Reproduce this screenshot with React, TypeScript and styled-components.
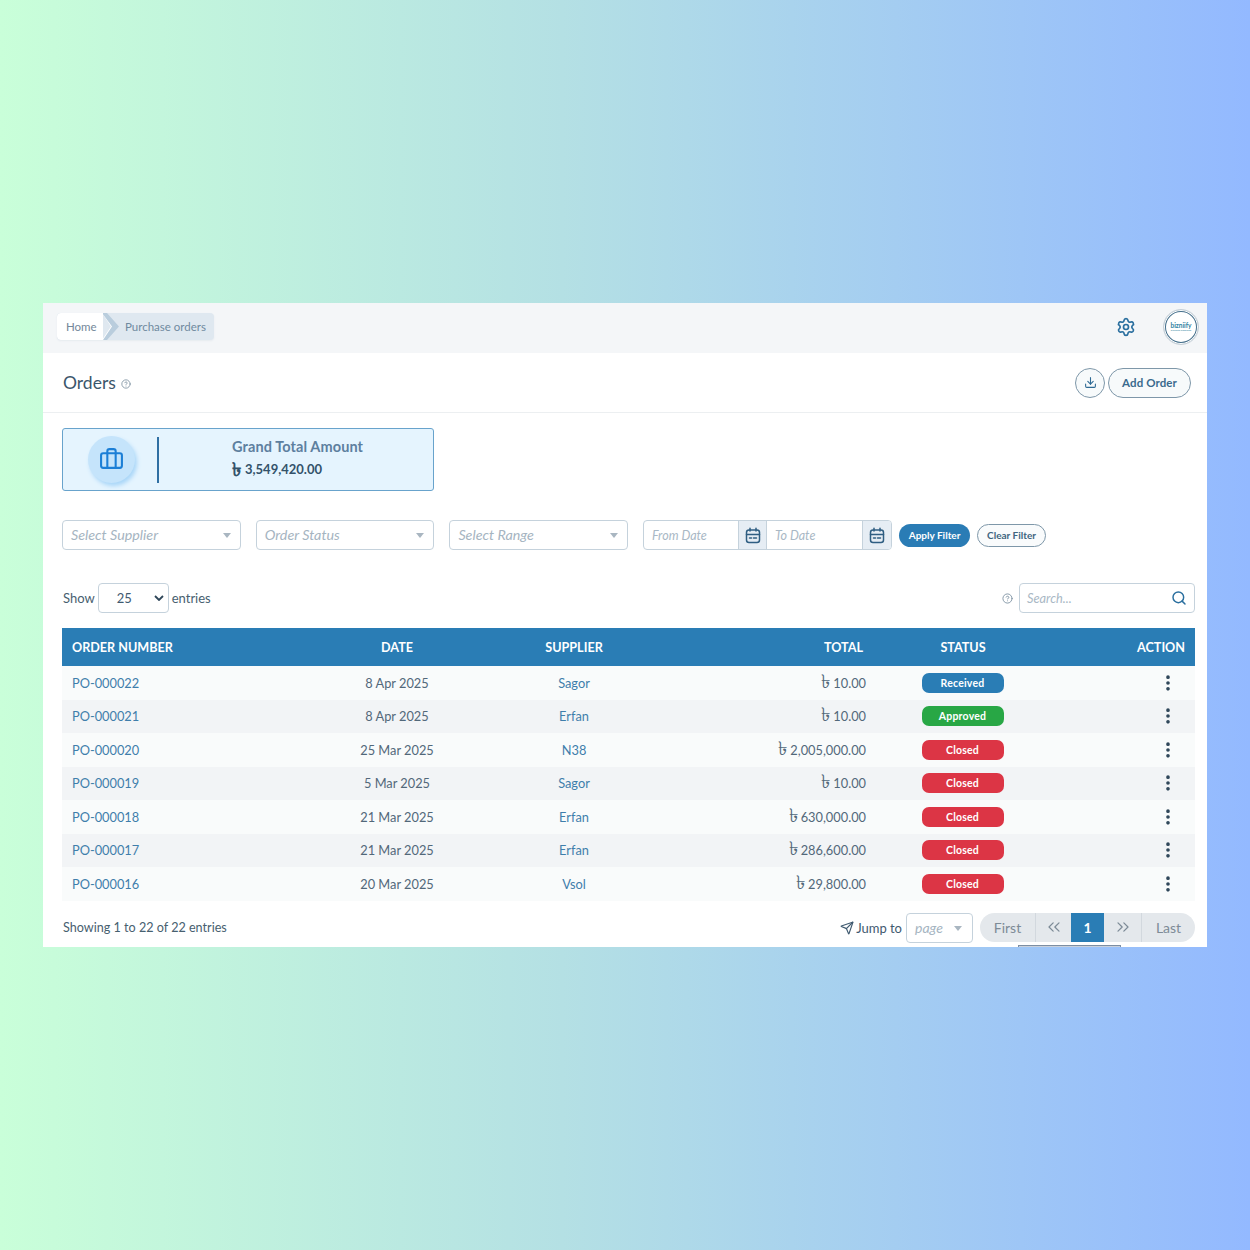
import React from 'react';
import styled, { createGlobalStyle } from 'styled-components';
import { Briefcase, CircleHelp, Download, EllipsisVertical, Search, Send, Settings, ChevronsLeft, ChevronsRight } from 'lucide-react';

const Global = createGlobalStyle`
  html, body { margin: 0; padding: 0; }
  * { box-sizing: border-box; }
  body { font-family: Lato, "Noto Sans", "DejaVu Sans", sans-serif; color: #3f5a70; }
`;

const Page = styled.div`
  width: 1250px; height: 1250px; display: flex; align-items: center; justify-content: center;
  background: linear-gradient(90deg, #c9ffd9 0%, #b4e0e4 45%, #93b9ff 100%);
`;
const Card = styled.main`
  position: relative; width: 1164px; height: 644px; background: #fff; overflow: hidden; display: flex; flex-direction: column;
`;
const TopBar = styled.header`
  height: 50px; flex: none; background: #f4f6f8; display: flex; align-items: center; justify-content: space-between; padding: 0 8px 3px 14px;
`;
const Crumbs = styled.nav`
  display: flex; align-items: stretch; height: 27px; font-size: 11.5px; border-radius: 4px; overflow: hidden; background: #dfe8f0; box-shadow: 0 1px 2px #e6ebef;
`;
const CrumbHome = styled.span`
  background: #fff; color: #74889a; padding: 0 9px; display: flex; align-items: center; width: 46px; position: relative; border-radius: 4px 0 0 4px;
`;
const CrumbArrow = styled.svg`
  width: 17px; height: 27px; flex: none; margin-left: -1px; background: #dfe8f0;
`;
const CrumbCurrent = styled.span`
  color: #6f8a9f; display: flex; align-items: center; padding: 0 8px 0 6px;
`;
const TopRight = styled.div`
  display: flex; align-items: center; gap: 27px; color: #2a6f9f;
`;
const Avatar = styled.div`
  width: 36px; height: 36px; border-radius: 50%; background: #fff; border: 1px solid #c6d0d8; box-shadow: inset 0 0 0 1px #fff, inset 0 0 0 2px #46708c;
  display: flex; flex-direction: column; align-items: center; justify-content: center; color: #2f7fa0; font-size: 6.500px; font-weight: 700; line-height: 7px;
`;
const AvatarSub = styled.span`
  font-size: 2.5px; line-height: 3px; font-weight: 400;
`;
const TitleBar = styled.section`
  height: 60px; flex: none; border-bottom: 1px solid #eceff1; display: flex; align-items: center; justify-content: space-between; padding: 0 16px 0 20px;
`;
const Title = styled.h1`
  margin: 0 0 1px; font-size: 17.5px; font-weight: 400; color: #3b566b; display: flex; align-items: center; gap: 5px;
  svg { color: #7b8f9f; margin-top: 3px; }
`;
const TitleActions = styled.div`
  display: flex; gap: 3px;
`;
const RoundBtn = styled.button`
  width: 30px; height: 30px; border-radius: 50%; border: 1px solid #7e97a9; background: #f7fafb; color: #2e6a94; padding: 0; display: flex; align-items: center; justify-content: center;
`;
const PillBtn = styled.button`
  height: 30px; width: 83px; border-radius: 15px; border: 1px solid #7e97a9; background: #f7fafb; color: #3a6a8e; font: 700 11.5px Lato, sans-serif; padding: 0; letter-spacing: .1px;
`;
const Content = styled.div`
  flex: 1; padding: 15px 12px 0 19px; display: flex; flex-direction: column;
`;
const Kpi = styled.section`
  width: 372px; height: 63px; border: 1px solid #68a3cc; border-radius: 3px; background: #e5f4fe; display: flex; align-items: center; padding-left: 25px;
`;
const KpiIcon = styled.div`
  width: 47px; height: 47px; border-radius: 50%; background: #c5e4fb; box-shadow: 2px 3px 4px #a9d6f8; color: #1c7fd6; display: flex; align-items: center; justify-content: center;
`;
const KpiRule = styled.div`
  width: 2px; height: 46px; background: #2f6fa3; margin-left: 22px;
`;
const KpiText = styled.div`
  margin: 0 0 4px 73px; display: flex; flex-direction: column; gap: 6px;
`;
const KpiLabel = styled.div`
  font-size: 14.5px; font-weight: 700; color: #5d7f9f; letter-spacing: .1px;
`;
const KpiValue = styled.div`
  font-size: 13px; font-weight: 700; color: #33526a; display: flex; align-items: center; height: 16px;
`;
const Taka = styled.span`
  font-size: 19px; line-height: 0; margin-right: 3px; font-weight: 400;
`;
const KpiTaka = styled(Taka)`
  font-weight: 700; margin-right: 4px;
`;
const Filters = styled.div`
  margin-top: 29px; display: flex; align-items: center;
`;
const SelectBox = styled.div`
  width: 178.7px; height: 30px; border: 1px solid #c5d2dc; border-radius: 4px; margin-right: 15px; padding: 0 9px 2px 8px; display: flex; align-items: center; justify-content: space-between;
  font-size: 14.300px; font-style: italic; color: #a5b4c1; background: #fff;
`;
const Caret = styled.span`
  width: 0; height: 0; border-left: 4.5px solid transparent; border-right: 4.5px solid transparent; border-top: 5px solid #a9b6c1;
  margin-top: 2px;
`;
const DateGroup = styled.div`
  width: 249px; height: 30px; border: 1px solid #c5d2dc; border-radius: 4px; display: flex; overflow: hidden; margin-right: 7px;
`;
const DateText = styled.div<{ $w: number }>`
  width: ${p => p.$w}px; padding-left: 8px; display: flex; align-items: center; font-size: 12.5px; font-style: italic; color: #a9b8c5;
`;
const DateAddon = styled.div`
  width: 29px; flex: none; background: #e6edf4; border-left: 1px solid #c5d2dc; border-right: 1px solid #c5d2dc; display: flex; align-items: center; justify-content: center; color: #2f5e82;
  &:last-child { border-right: 0; }
`;
const ApplyBtn = styled.button`
  width: 71px; height: 23px; border-radius: 12px; border: 0; background: #2a7cb5; color: #fff; font: 700 10px Lato, sans-serif; padding: 0; margin-right: 7px;
`;
const ClearBtn = styled.button`
  width: 69px; height: 23px; border-radius: 12px; border: 1px solid #7e97a9; background: #f9fbfc; color: #3f6580; font: 700 10px Lato, sans-serif; padding: 0;
`;
const ListBar = styled.div`
  margin-top: 33px; height: 30px; display: flex; align-items: center; justify-content: space-between; font-size: 13px; color: #47606f;
`;
const ShowGroup = styled.div`
  display: flex; align-items: center; gap: 3px; padding-left: 1px;
`;
const PageSize = styled.div`
  width: 71px; height: 30px; border: 1px solid #c5d2dc; border-radius: 4px; display: flex; align-items: center; justify-content: space-between; padding: 0 4px 0 18px; color: #3f5a70;
`;
const SearchGroup = styled.div`
  display: flex; align-items: center; gap: 6px; color: #7f93a3;
`;
const SearchBox = styled.div`
  width: 176px; height: 30px; border: 1px solid #c5d2dc; border-radius: 4px; display: flex; align-items: center; justify-content: space-between; padding: 0 7px; font-size: 12.8px; font-style: italic; color: #a9b8c5;
  svg { color: #2a6f9f; }
`;
const Table = styled.table`
  margin-top: 15px; width: 1133px; table-layout: fixed; border-collapse: collapse; font-size: 12.8px;
`;
const Th = styled.th<{ $a?: string; $pr?: number }>`
  height: 38px; background: #2a7db5; color: #fff; font-size: 12.6px; font-weight: 700; text-align: ${p => p.$a || 'center'}; padding: 0 ${p => p.$pr ?? 10}px 0 10px;
`;
const Tr = styled.tr`
  height: 33.5px;
  background: #f9fbfb;
  &:nth-child(even) { background: #f2f4f6; }
`;
const Td = styled.td<{ $a?: string }>`
  padding: 0 10px; text-align: ${p => p.$a || 'center'}; color: #52687a;
`;
const LinkTd = styled(Td)`
  color: #3f7eab;
`;
const Status = styled.span<{ $c: string }>`
  display: inline-flex; align-items: center; justify-content: center; width: 82px; height: 20px; margin-right: 1px; border-radius: 7px; background: ${p => p.$c}; color: #fff; font-size: 10.5px; font-weight: 700; letter-spacing: .2px;
`;
const Dots = styled.span`
  display: inline-flex; margin-right: 7px; color: #2d4558; vertical-align: middle;
`;
const Footer = styled.div`
  margin-top: 12px; padding-left: 1px; display: flex; align-items: center; justify-content: space-between; font-size: 12.6px; color: #47606f;
`;
const FootRight = styled.div`
  display: flex; align-items: center;
`;
const Jump = styled.span`
  display: flex; align-items: center; gap: 2px; font-size: 13px; color: #3f5a70; margin-right: 4px;
`;
const PageSelect = styled.div`
  width: 67px; height: 30px; border: 1px solid #c5d2dc; border-radius: 4px; display: flex; align-items: center; justify-content: space-between; padding: 0 10px 0 8px; font-size: 14px; font-style: italic; color: #a5b4c1; margin-right: 7px;
`;
const Pager = styled.div`
  display: flex; height: 29px; margin-bottom: 1px; border-radius: 15px; overflow: hidden; background: #e4e8ec;
`;
const PageItem = styled.span<{ $w: number; $on?: boolean; $nb?: boolean }>`
  width: ${p => p.$w}px; display: flex; align-items: center; justify-content: center; font-size: 14px; font-weight: ${p => p.$on ? 700 : 400};
  color: ${p => p.$on ? '#fff' : '#7d8b97'}; background: ${p => p.$on ? '#2a7db5' : 'transparent'};
  border-left: ${p => p.$nb ? '0' : '1px solid #d2d8de'};
`;
const ClippedTip = styled.div`
  position: absolute; left: 975px; bottom: 0; width: 103px; height: 2px; background: #c9d1dc; border: 1px solid #7d8ea3; border-bottom: 0;
`;

const CalendarIcon = () => (
  <svg width="16" height="17" viewBox="0 0 16 17" fill="none" stroke="currentColor" strokeWidth="1.500" strokeLinecap="round">
    <rect x="1.500" y="3" width="13" height="12.500" rx="2.500" />
    <path d="M1.500 7.500H14.500M5 1.200V4M11 1.200V4M4.500 11H6.500M8.500 11H11.500" />
  </svg>
);

const rows = [
  ['PO-000022', '8 Apr 2025', 'Sagor', '10.00', 'Received'],
  ['PO-000021', '8 Apr 2025', 'Erfan', '10.00', 'Approved'],
  ['PO-000020', '25 Mar 2025', 'N38', '2,005,000.00', 'Closed'],
  ['PO-000019', '5 Mar 2025', 'Sagor', '10.00', 'Closed'],
  ['PO-000018', '21 Mar 2025', 'Erfan', '630,000.00', 'Closed'],
  ['PO-000017', '21 Mar 2025', 'Erfan', '286,600.00', 'Closed'],
  ['PO-000016', '20 Mar 2025', 'Vsol', '29,800.00', 'Closed'],
];
const colors: Record<string, string> = { Received: '#2a7db5', Approved: '#28a745', Closed: '#dc3545' };

export default function App() {
  return (
    <Page>
      <Global />
      <Card>
        <TopBar>
          <Crumbs>
            <CrumbHome>Home</CrumbHome>
            <CrumbArrow viewBox="0 0 17 27"><path d="M0 0H4L16.500 13.500L4 27H0L9 13.500Z" fill="#fff" /><path d="M0 0H5L17 13.500L5 27H1L10 13.500Z" fill="#b9cddd" /></CrumbArrow>
            <CrumbCurrent>Purchase orders</CrumbCurrent>
          </Crumbs>
          <TopRight>
            <Settings size={20} strokeWidth={2} />
            <Avatar>bizniify<AvatarSub>business simplified</AvatarSub></Avatar>
          </TopRight>
        </TopBar>
        <TitleBar>
          <Title>Orders <CircleHelp size={10} /></Title>
          <TitleActions>
            <RoundBtn aria-label="Download"><Download size={13} /></RoundBtn>
            <PillBtn>Add Order</PillBtn>
          </TitleActions>
        </TitleBar>
        <Content>
          <Kpi>
            <KpiIcon><Briefcase size={25} strokeWidth={2} /></KpiIcon>
            <KpiRule />
            <KpiText>
              <KpiLabel>Grand Total Amount</KpiLabel>
              <KpiValue><KpiTaka>৳</KpiTaka>3,549,420.00</KpiValue>
            </KpiText>
          </Kpi>
          <Filters>
            <SelectBox>Select Supplier<Caret /></SelectBox>
            <SelectBox>Order Status<Caret /></SelectBox>
            <SelectBox>Select Range<Caret /></SelectBox>
            <DateGroup>
              <DateText $w={94}>From Date</DateText>
              <DateAddon><CalendarIcon /></DateAddon>
              <DateText $w={95}>To Date</DateText>
              <DateAddon><CalendarIcon /></DateAddon>
            </DateGroup>
            <ApplyBtn>Apply Filter</ApplyBtn>
            <ClearBtn>Clear Filter</ClearBtn>
          </Filters>
          <ListBar>
            <ShowGroup>
              Show
              <PageSize>25<svg width="10" height="6" viewBox="0 0 10 6"><path d="M1 1l4 4 4-4" fill="none" stroke="#2d4558" strokeWidth="1.800" /></svg></PageSize>
              entries
            </ShowGroup>
            <SearchGroup>
              <CircleHelp size={11} />
              <SearchBox>Search...<Search size={16} strokeWidth={2.200} /></SearchBox>
            </SearchGroup>
          </ListBar>
          <Table>
            <colgroup>
              <col width={247} /><col width={176} /><col width={178} /><col width={213} /><col width={174} /><col width={145} />
            </colgroup>
            <thead>
              <tr>
                <Th $a="left">ORDER NUMBER</Th>
                <Th>DATE</Th>
                <Th>SUPPLIER</Th>
                <Th $a="right" $pr={13}>TOTAL</Th>
                <Th>STATUS</Th>
                <Th $a="right">ACTION</Th>
              </tr>
            </thead>
            <tbody>
              {rows.map(r => (
                <Tr key={r[0]}>
                  <LinkTd $a="left">{r[0]}</LinkTd>
                  <Td>{r[1]}</Td>
                  <LinkTd>{r[2]}</LinkTd>
                  <Td $a="right"><Taka>৳</Taka>{r[3]}</Td>
                  <Td><Status $c={colors[r[4]]}>{r[4]}</Status></Td>
                  <Td $a="right"><Dots><EllipsisVertical size={20} strokeWidth={2.400} /></Dots></Td>
                </Tr>
              ))}
            </tbody>
          </Table>
          <Footer>
            <span>Showing 1 to 22 of 22 entries</span>
            <FootRight>
              <Jump><Send size={14} />Jump to</Jump>
              <PageSelect>page<Caret /></PageSelect>
              <Pager>
                <PageItem $w={55} $nb>First</PageItem>
                <PageItem $w={36}><ChevronsLeft size={20} strokeWidth={1.500} /></PageItem>
                <PageItem $w={33} $on $nb>1</PageItem>
                <PageItem $w={37} $nb><ChevronsRight size={20} strokeWidth={1.500} /></PageItem>
                <PageItem $w={54}>Last</PageItem>
              </Pager>
            </FootRight>
          </Footer>
        </Content>
        <ClippedTip />
      </Card>
    </Page>
  );
}
